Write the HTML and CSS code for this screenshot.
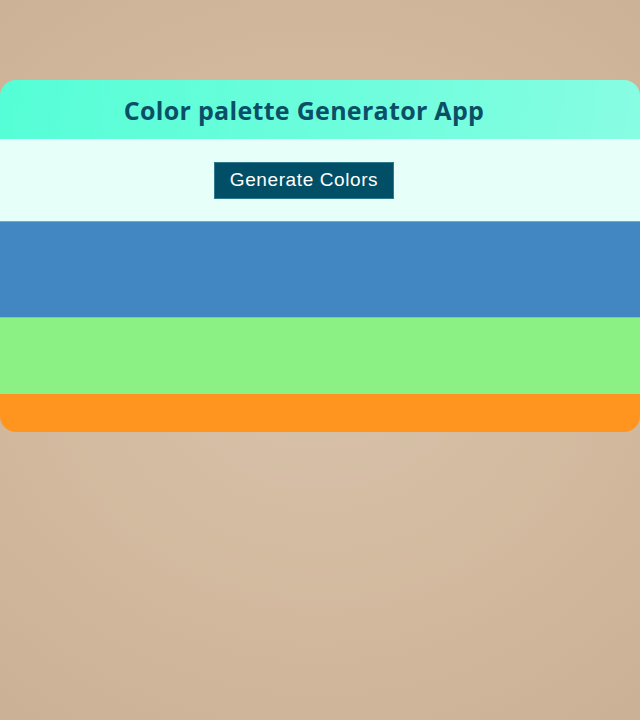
FILE: index.html
```html
<!DOCTYPE html>
<html lang="en">
<head>
<meta charset="utf-8">
<title>Color palette Generator App</title>
<link rel="stylesheet" href="styles.css">
</head>
<body>
<main class="page">
  <section class="card">
    <header class="card-header">
      <h1 class="title">Color palette Generator App</h1>
    </header>
    <div class="controls">
      <button class="btn" type="button">Generate Colors</button>
    </div>
    <div class="swatch swatch-blue"></div>
    <div class="swatch swatch-green"></div>
    <div class="swatch swatch-orange"></div>
  </section>
</main>
</body>
</html>
```
FILE: styles.css
```css
html, body {
  margin: 0;
  padding: 0;
  height: 100%;
}
body {
  background: radial-gradient(ellipse 80% 65% at 50% 48%, #d7c2aa 0%, #d2b99e 60%, #cbb296 100%);
  font-family: "Open Sans", "Liberation Sans", sans-serif;
}
.page {
  padding-top: 80px;
}
.card {
  border-radius: 16px;
  overflow: hidden;
  display: flex;
  flex-direction: column;
}
.card-header {
  height: 59px;
  background: linear-gradient(100deg, #55fed6 0%, #6bfddc 50%, #88fde3 100%);
  display: flex;
  align-items: center;
  justify-content: center;
  padding-right: 32px;
}
.title {
  margin: 0;
  font-size: 25px;
  font-weight: 700;
  color: #0b4f66;
  letter-spacing: 0.3px;
}
.controls {
  height: 82px;
  background: #e6fff8;
  display: flex;
  justify-content: center;
  align-items: flex-start;
  padding-top: 23px;
  padding-right: 32px;
  box-sizing: border-box;
}
.btn {
  width: 180px;
  height: 37px;
  background: #014f66;
  color: #ffffff;
  border: 1px solid #2f7a8f;
  font-family: "Liberation Sans", Arial, sans-serif;
  font-size: 19px;
  letter-spacing: 0.6px;
  padding: 0 0 2px;
}
.swatch-blue {
  height: 96px;
  background: #4287c1;
  border-top: 1px solid #7aa6c8;
  box-sizing: border-box;
}
.swatch-green {
  height: 77px;
  background: #8cf184;
  border-top: 1px solid #84c4a8;
  box-sizing: border-box;
}
.swatch-orange {
  height: 38px;
  background: #ff951e;
}
```
